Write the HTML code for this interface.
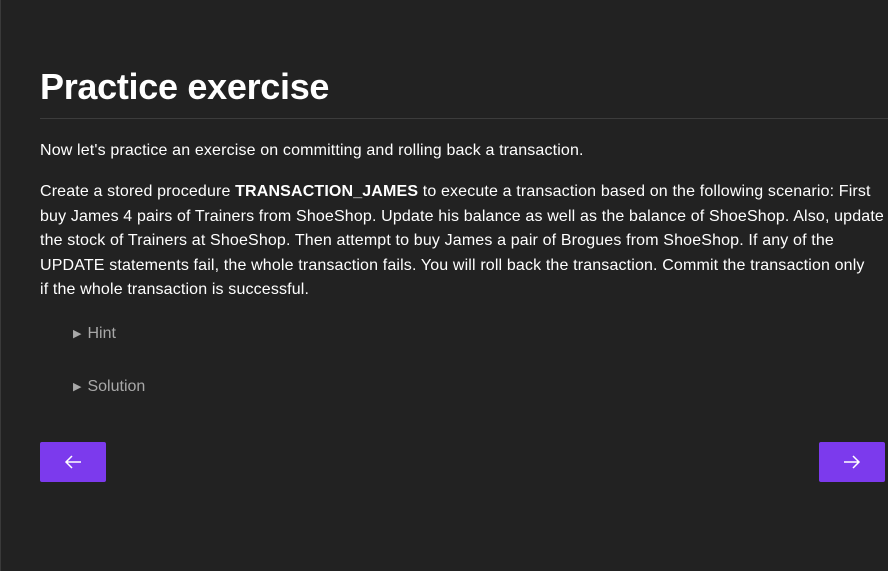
<!DOCTYPE html>
<html><head><meta charset="utf-8"><style>
html,body{margin:0;padding:0}
body{width:888px;height:571px;background:#222222;color:#fff;font-family:"Liberation Sans",sans-serif;overflow:hidden;position:relative;border-left:1px solid #3a3a3a;box-sizing:border-box}
h1{position:absolute;left:39px;top:64px;margin:0;font-size:36px;font-weight:bold;line-height:46px;letter-spacing:-0.3px}
.hr{position:absolute;left:39px;right:0;top:118px;height:1px;background:#3c3c3c}
p{position:absolute;left:39px;margin:0;font-size:16px;line-height:24.5px;white-space:nowrap;letter-spacing:0.15px}
.s{position:absolute;left:72px;font-size:16px;color:#a8a8a8}
.s span{font-size:11px;margin-right:6px;position:relative;top:-1px}
.btn{position:absolute;top:442px;width:66px;height:40px;background:#7c3aed;border-radius:2px}
.btn svg{position:absolute;left:24px;top:13px}
</style></head><body>
<h1>Practice exercise</h1>
<div class="hr"></div>
<p style="top:139px">Now let's practice an exercise on committing and rolling back a transaction.</p>
<p style="top:180px">Create a stored procedure <b>TRANSACTION_JAMES</b> to execute a transaction based on the following scenario: First<br>buy James 4 pairs of Trainers from ShoeShop. Update his balance as well as the balance of ShoeShop. Also, update<br>the stock of Trainers at ShoeShop. Then attempt to buy James a pair of Brogues from ShoeShop. If any of the<br>UPDATE statements fail, the whole transaction fails. You will roll back the transaction. Commit the transaction only<br>if the whole transaction is successful.</p>
<div class="s" style="top:325px"><span>▶</span>Hint</div>
<div class="s" style="top:378px"><span>▶</span>Solution</div>
<div class="btn" style="left:39px"><svg width="18" height="14" viewBox="0 0 18 14"><path d="M17 7H2M8 1L2 7l6 6" stroke="#fff" stroke-width="1.5" fill="none"/></svg></div>
<div class="btn" style="left:818px"><svg width="18" height="14" viewBox="0 0 18 14"><path d="M1 7h15M10 1l6 6-6 6" stroke="#fff" stroke-width="1.5" fill="none"/></svg></div>
</body></html>
